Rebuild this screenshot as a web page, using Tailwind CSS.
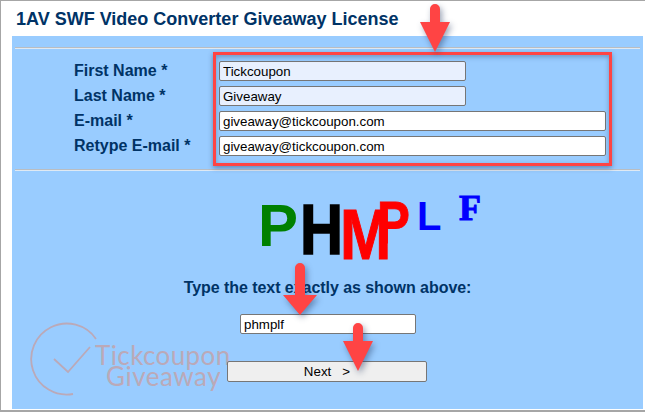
<!DOCTYPE html>
<html lang="en">
<head>
    <meta charset="UTF-8">
    <title>1AV SWF Video Converter Giveaway License</title>
    <script src="https://cdn.jsdelivr.net/npm/@tailwindcss/browser@4"></script>
</head>
<body class="bg-white">
<div class="relative w-[645px] h-[412px] overflow-hidden border-t border-l border-r-0 border-b-2 border-[#a6a6a6] bg-white font-['Liberation_Sans',Arial,sans-serif]">

    <!-- Title -->
    <h1 class="h-[35px] pl-[15px] pt-[9px] text-[18px] leading-[18px] font-bold text-[#003366]">1AV SWF Video Converter Giveaway License</h1>

    <!-- Blue panel -->
    <div class="relative ml-[11px] mr-[2px] h-[373px] bg-[#99ccff] pt-[11px]">

        <!-- Watermark -->
        <div class="absolute left-[18px] top-[286px] w-[205px] h-[76px]">
            <svg class="absolute left-0 top-0" width="80" height="76" viewBox="0 0 80 76" fill="none" stroke="#bba9b8" stroke-width="1.8">
                <path d="M66 17 A35.5 35.5 0 1 0 43 72"/>
                <path d="M24 37 L38 50 L60 25"/>
            </svg>
            <div class="absolute left-[65px] top-[19px] text-[26px] leading-[28px] tracking-[0.4px] text-[#bba9b8] font-['Lato',sans-serif] font-normal whitespace-nowrap">Tickcoupon</div>
            <div class="absolute left-[76px] top-[40px] text-[26px] leading-[28px] tracking-[0.5px] text-[#bba9b8] font-['Lato',sans-serif] font-normal whitespace-nowrap">Giveaway</div>
        </div>

        <div class="relative">
            <div class="mx-[3px] h-[2px] bg-[#b9bdc2] border-b border-[#dfe9f3]"></div>

            <!-- Name and e-mail rows -->
            <div class="mt-[12px] grid grid-cols-[145px_1fr] gap-y-[5px] pl-[62px] text-[16px] font-bold text-[#003366]">
                <label class="h-[20px] leading-[19px]">First Name *</label>
                <input class="w-[247px] h-[20px] px-[3px] bg-[#e8f0fe] border border-[#767676] rounded-[2px] text-[13.33px] font-normal text-black" value="Tickcoupon">
                <label class="h-[20px] leading-[19px]">Last Name *</label>
                <input class="w-[247px] h-[20px] px-[3px] bg-[#e8f0fe] border border-[#767676] rounded-[2px] text-[13.33px] font-normal text-black" value="Giveaway">
                <label class="h-[20px] leading-[19px]">E-mail *</label>
                <input class="w-[387px] h-[20px] px-[3px] bg-white border border-[#767676] rounded-[2px] text-[13.33px] font-normal text-black" value="giveaway@tickcoupon.com">
                <label class="h-[20px] leading-[19px]">Retype E-mail *</label>
                <input class="w-[387px] h-[20px] px-[3px] bg-white border border-[#767676] rounded-[2px] text-[13.33px] font-normal text-black" value="giveaway@tickcoupon.com">
            </div>

            <div class="mx-[3px] mt-[13px] h-[2px] bg-[#b9bdc2] border-b border-[#dfe9f3]"></div>

            <!-- Captcha letters -->
            <div class="relative h-[107px]">
                <span class="absolute left-[246px] top-[20px] text-[60px] leading-[70px] font-bold text-[#008000]">P</span>
                <span class="absolute left-[288px] top-[19px] origin-top-left scale-x-[0.84] text-[71px] leading-[80px] font-bold text-black [-webkit-text-stroke:1.5px_#000000]">H</span>
                <span class="absolute left-[328px] top-[24px] origin-top-left scale-x-[0.88] text-[70px] leading-[80px] font-bold text-[#ff0000] [-webkit-text-stroke:1px_#ff0000]">M</span>
                <span class="absolute left-[365px] top-[22px] origin-top-left scale-x-[0.82] text-[60px] leading-[60px] font-bold text-[#ff0000] [-webkit-text-stroke:1px_#ff0000]">P</span>
                <span class="absolute left-[405px] top-[22px] text-[40px] leading-[46px] font-bold text-[#0000ff]">L</span>
                <span class="absolute left-[447px] top-[17px] font-['Liberation_Serif',serif] text-[36px] leading-[40px] font-bold text-[#0000ff] [-webkit-text-stroke:1px_#0000ff]">F</span>
            </div>

            <p class="h-[20px] text-center text-[16px] leading-[20px] tracking-[-0.05px] font-bold text-[#003366]">Type the text exactly as shown above:</p>

            <input class="block mt-[16px] ml-[228px] w-[176px] h-[20px] px-[3px] bg-white border border-[#767676] rounded-[2px] text-[13.33px] text-black" value="phmplf">

            <button class="block mt-[27px] ml-[215px] w-[200px] h-[21px] bg-[#efefef] border border-[#767676] rounded-[2px] text-[13.33px] text-black whitespace-pre">Next   &gt;</button>
        </div>
    </div>

    <!-- Red highlight box -->
    <div class="absolute left-[212px] top-[51px] w-[399px] h-[114px] border-[3px] border-[#ff4444] shadow-[0_2px_5px_rgba(30,50,90,0.45),inset_0_2px_5px_rgba(30,50,90,0.35)]"></div>

    <!-- Arrows -->
    <svg class="absolute left-[418px] top-[2px] drop-shadow-[2px_3px_3px_rgba(30,50,90,0.45)]" width="34" height="50" viewBox="0 0 34 50"><path fill="#ff4444" d="M11 19 V6 a5 5 0 0 1 10 0 V19 H31 L16 49 L1 19 Z"/></svg>
    <svg class="absolute left-[281px] top-[261px] drop-shadow-[2px_3px_3px_rgba(30,50,90,0.45)]" width="36" height="54" viewBox="0 0 36 54"><path fill="#ff4444" d="M13 33 V6 a5 5 0 0 1 10 0 V33 H35 L18 53 L1 33 Z"/></svg>
    <svg class="absolute left-[341px] top-[321px] drop-shadow-[2px_3px_3px_rgba(30,50,90,0.45)]" width="34" height="50" viewBox="0 0 34 50"><path fill="#ff4444" d="M11 19 V6 a5 5 0 0 1 10 0 V19 H31 L16 49 L1 19 Z"/></svg>
</div>
</body>
</html>
